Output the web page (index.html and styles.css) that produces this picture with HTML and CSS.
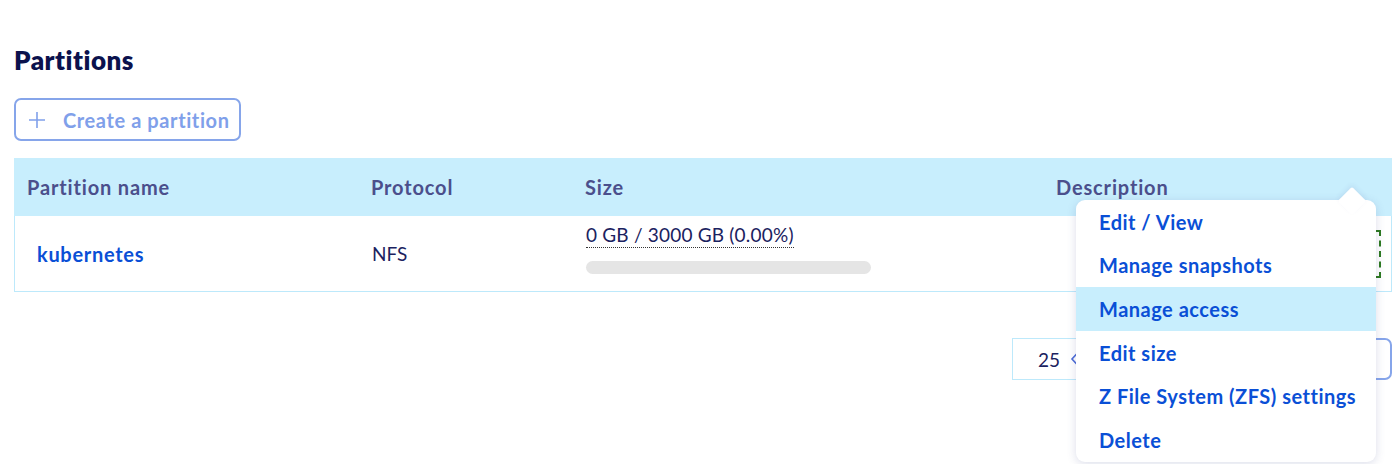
FILE: index.html
```html
<!DOCTYPE html>
<html>
<head>
<meta charset="utf-8">
<link rel="stylesheet" href="styles.css">
</head>
<body>
<div class="page">
  <h2 class="title">Partitions</h2>
  <button class="create-btn">
    <svg class="plus" width="18" height="18" viewBox="0 0 18 18"><path d="M9 1v16M1 9h16" stroke="currentColor" stroke-width="1.6" fill="none"/></svg>
    <span>Create a partition</span>
  </button>
  <div class="table">
    <div class="thead">
      <div class="th">Partition name</div>
      <div class="th">Protocol</div>
      <div class="th">Size</div>
      <div class="th">Description</div>
    </div>
    <div class="trow">
      <div class="td"><a class="link">kubernetes</a></div>
      <div class="td">NFS</div>
      <div class="td size">
        <span class="usage">0 GB / 3000 GB (0.00%)</span>
        <div class="bar"></div>
      </div>
      <div class="td actions"><span class="action-btn"><span class="dots">⋯</span></span></div>
    </div>
  </div>
  <div class="pager">
    <div class="select">25 <svg class="chev" width="10" height="16" viewBox="0 0 10 16"><path d="M8 1.5L2 8l6 6.5" stroke="currentColor" stroke-width="1.6" fill="none"/></svg></div>
    <div class="pager-spacer"></div>
    <div class="page-btn"></div>
  </div>
</div>
<div class="menu">
  <div class="arrow"></div>
  <div class="item">Edit / View</div>
  <div class="item">Manage snapshots</div>
  <div class="item active">Manage access</div>
  <div class="item">Edit size</div>
  <div class="item">Z File System (ZFS) settings</div>
  <div class="item">Delete</div>
</div>
</body>
</html>
```
FILE: styles.css
```css
html, body {
  margin: 0;
  padding: 0;
  background: #fff;
  font-family: Lato, "Open Sans", sans-serif;
  overflow: hidden;
}
.page {
  padding: 44px 8px 0 14px;
}
.title {
  margin: 0;
  font-size: 26px;
  line-height: 32px;
  font-weight: 800;
  letter-spacing: 0.5px;
  color: #0b124d;
}
.create-btn {
  margin-top: 22px;
  display: flex;
  align-items: center;
  height: 43px;
  width: 227px;
  box-sizing: border-box;
  padding: 0 12px 0 12px;
  border: 2px solid #86a5ea;
  border-radius: 7px;
  background: #fff;
  color: #80a0ea;
  font-family: inherit;
  font-size: 20px;
  font-weight: 700;
  letter-spacing: 0.6px;
  white-space: nowrap;
}
.plus {
  color: #80a0ea;
  margin-right: 17px;
  flex: none;
}
.table {
  margin-top: 17px;
}
.thead, .trow {
  display: grid;
  grid-template-columns: 344px 214px 471px 1fr;
}
.thead {
  height: 58px;
  background: #c8eefd;
  align-items: center;
}
.th {
  padding-left: 13px;
  font-size: 20px;
  font-weight: 700;
  letter-spacing: 0.85px;
  color: #4b4f8c;
}
.trow {
  height: 76px;
  box-sizing: border-box;
  border: 1px solid #bde9fb;
  border-top: none;
  align-items: center;
}
.td {
  padding-left: 13px;
  font-size: 19px;
  color: #1b2260;
}
.trow .td:first-child { padding-left: 22px; }
.link {
  color: #0a4fd6;
  font-weight: 700;
  font-size: 20px;
  letter-spacing: 0.7px;
}
.size {
  align-self: start;
  padding-top: 7px;
}
.usage {
  display: inline-block;
  font-size: 19px;
  line-height: 24px;
  letter-spacing: 0.2px;
  color: #1b2260;
  border-bottom: 1px dotted #333;
}
.bar {
  margin-top: 13px;
  width: 285px;
  height: 13px;
  border-radius: 7px;
  background: #e5e5e5;
}
.actions {
  display: flex;
  justify-content: flex-end;
  padding-right: 10px;
}
.action-btn {
  width: 40px;
  height: 48px;
  box-sizing: border-box;
  border: 2px dashed #2d7a1f;
  display: flex;
  align-items: center;
  justify-content: center;
  color: #4b6bd6;
}
.pager {
  margin-top: 46px;
  display: flex;
  align-items: center;
  height: 42px;
  padding-left: 998px;
}
.select {
  width: 90px;
  height: 42px;
  box-sizing: border-box;
  border: 1px solid #bde9fb;
  display: flex;
  align-items: center;
  padding-left: 25px;
  font-size: 19px;
  color: #1b2260;
}
.chev {
  margin-left: 10px;
  color: #4b6bd6;
}
.pager-spacer { flex: 1; }
.page-btn {
  width: 52px;
  height: 42px;
  box-sizing: border-box;
  border: 2px solid #86a5ea;
  border-radius: 7px;
}
.menu {
  position: absolute;
  left: 1076px;
  top: 200px;
  width: 300px;
  background: #fff;
  border-radius: 9px;
  box-shadow: 0 2px 10px rgba(60, 70, 140, 0.18);
}
.arrow {
  position: absolute;
  top: -9px;
  left: 266px;
  width: 20px;
  height: 20px;
  background: #fff;
  transform: rotate(45deg);
  box-shadow: -2px -2px 5px rgba(60, 70, 140, 0.08);
  border-radius: 2px;
}
.item {
  position: relative;
  height: 43.6px;
  display: flex;
  align-items: center;
  padding-left: 23px;
  font-size: 20px;
  font-weight: 700;
  letter-spacing: 0.5px;
  white-space: nowrap;
  color: #0a4fd6;
}
.item.active {
  background: #c8eefd;
}
.item:first-of-type { border-radius: 9px 9px 0 0; }
.item:last-child { border-radius: 0 0 9px 9px; }
```
